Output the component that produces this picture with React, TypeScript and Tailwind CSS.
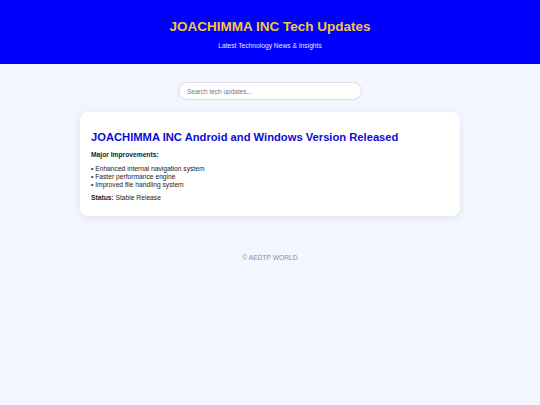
export default function App() {
  const items = [
    'Enhanced internal navigation system',
    'Faster performance engine',
    'Improved file handling system',
  ]

  return (
    <div className="min-h-[405px] bg-[#f3f6fe] font-['Liberation_Sans',Arial,sans-serif]">
      {/* Header */}
      <header className="h-[64px] bg-[#0000ff] flex flex-col items-center pt-[19px]">
        <h1 className="text-[13.5px] leading-[16px] font-bold text-[#f4c73a]">JOACHIMMA INC Tech Updates</h1>
        <p className="mt-[6px] text-[6.7px] leading-[9px] text-[#e6e8ff]">Latest Technology News &amp; Insights</p>
      </header>

      {/* Search */}
      <div className="flex justify-center pt-[18px]">
        <input
          type="text"
          placeholder="Search tech updates..."
          className="w-[184px] h-[18px] rounded-full border border-[#d8dbe3] bg-white px-[8px] text-[6.5px] text-[#333] placeholder:text-[#777] outline-none"
        />
      </div>

      {/* Card */}
      <div className="flex justify-center pt-[12px]">
        <div className="w-[380px] rounded-[8px] bg-white shadow-[0_2px_8px_rgba(0,0,40,0.08)] px-[11px] pt-[19px] pb-[14px] text-[#222]">
          <h2 className="text-[11.2px] leading-[13px] font-bold text-[#0b0bd6]">
            JOACHIMMA INC Android and Windows Version Released
          </h2>
          <p className="mt-[7px] text-[6.7px] leading-[8px] font-bold">Major Improvements:</p>
          <ul className="mt-[6px] text-[6.7px] leading-[8px]">
            {items.map((t) => (
              <li key={t}>• {t}</li>
            ))}
          </ul>
          <p className="mt-[5px] text-[6.7px] leading-[8px]">
            <span className="font-bold">Status:</span> Stable Release
          </p>
        </div>
      </div>

      {/* Footer */}
      <footer className="pt-[37px] text-center text-[6.7px] leading-[9px] text-[#8a8f99]">© AEDTP WORLD</footer>
    </div>
  )
}
